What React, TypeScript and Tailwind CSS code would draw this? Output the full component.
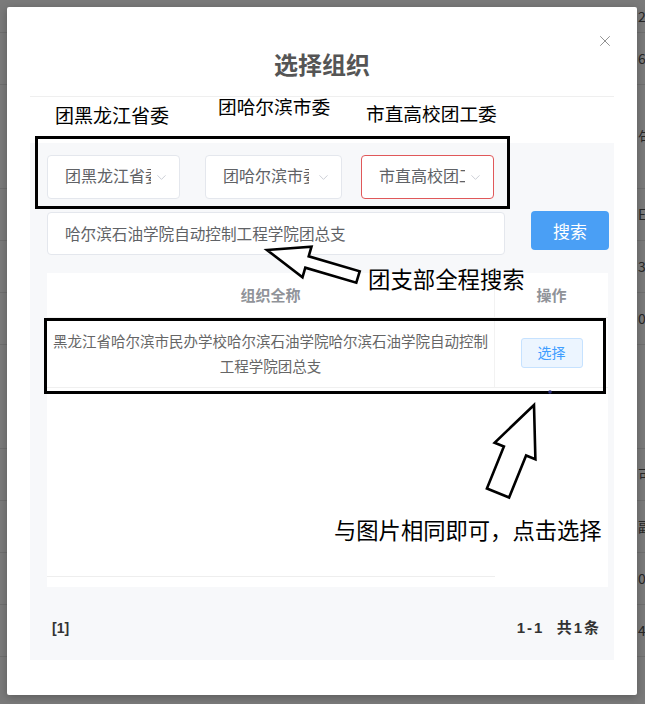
import { ChevronDown, X } from "lucide-react";

const bgRows = [
  { h: "h-[33px]", t: "2" },
  { h: "h-[52px]", t: "6" },
  { h: "h-[104px]", t: "句" },
  { h: "h-[52px]", t: "E" },
  { h: "h-[52px]", t: "3" },
  { h: "h-[52px]", t: "0" },
  { h: "h-[104px]", t: "" },
  { h: "h-[52px]", t: "可" },
  { h: "h-[52px]", t: "副" },
  { h: "h-[52px]", t: "0" },
  { h: "h-[52px]", t: "4" },
  { h: "h-[52px]", t: "" },
];

function Select({ label, width, danger }: { label: string; width: string; danger?: boolean }) {
  return (
    <div
      className={`${width} h-[44px] shrink-0 bg-white rounded-[4px] border flex items-center pl-[17px] pr-[10px] ${
        danger ? "border-[#e0585a]" : "border-[#e4e7ed]"
      }`}
    >
      <div className="flex-1 overflow-hidden whitespace-nowrap text-[16px] text-[#606266] leading-[22px]">
        <span className="inline-block w-[86px] overflow-hidden">{label}</span>
      </div>
      <ChevronDown size={15} strokeWidth={1.3} className="text-[#c0c4cc] shrink-0" />
    </div>
  );
}

export default function App() {
  return (
    <div className="relative w-[645px] h-[704px] overflow-hidden bg-[#7a7a7a] font-['Noto_Sans_CJK_SC',sans-serif]">
      {/* page behind the overlay */}
      <div className="flex flex-col">
        {bgRows.map((r, i) => (
          <div key={i} className={`${r.h} border-b border-[#6e6e6e] flex items-center pl-[638px] whitespace-nowrap text-[14px] text-[#262626]`}>
            {r.t}
          </div>
        ))}
      </div>

      {/* modal */}
      <div className="absolute left-[7px] top-[7px] w-[630px] h-[688px] bg-white rounded-[2px] shadow-[0_2px_8px_rgba(0,0,0,0.25)] flex flex-col">
        <X size={18} strokeWidth={1.3} className="absolute left-[589px] top-[25px] text-[#8f8f8f]" />
        <div className="h-[90px] mx-[23px] border-b border-[#efefef] flex justify-center">
          <h2 className="pt-[41px] text-[24px] leading-[32px] font-bold text-[#555]">选择组织</h2>
        </div>

        <div className="mt-[46px] mx-[23px] h-[517px] bg-[#f7f8fa] pl-[17px] pr-[13px] pt-[12px] flex flex-col">
          <div className="flex h-[44px]">
            <Select label="团黑龙江省委" width="w-[133px]" />
            <div className="ml-[25px]">
              <Select label="团哈尔滨市委" width="w-[137px]" />
            </div>
            <div className="ml-[19px]">
              <Select label="市直高校团工委" width="w-[133px]" danger />
            </div>
          </div>

          <div className="flex mt-[13px]">
            <div className="w-[458px] h-[43px] shrink-0 bg-white border border-[#e4e7ed] rounded-[4px] flex items-center pl-[17px] text-[15.6px] text-[#606266]">
              哈尔滨石油学院自动控制工程学院团总支
            </div>
            <button className="ml-[26px] -mt-[1px] w-[78px] h-[39px] shrink-0 rounded-[4px] bg-[#4a9ff5] text-white text-[17px]">
              搜索
            </button>
          </div>

          <div className="mt-[18px] w-[561px] h-[314px] bg-white flex flex-col">
            <div className="h-[45px] flex border-b border-[#f2f2f2] text-[15px] font-bold text-[#909399]">
              <div className="w-[448px] border-r border-[#f2f2f2] flex items-center justify-center">组织全称</div>
              <div className="flex-1 flex items-center justify-center">操作</div>
            </div>
            <div className="h-[70px] flex border-b border-[#f0f0f0]">
              <div className="w-[448px] border-r border-[#f2f2f2] flex items-center justify-center text-center text-[14.5px] leading-[25px] text-[#666] px-[4px]">
                黑龙江省哈尔滨市民办学校哈尔滨石油学院哈尔滨石油学院自动控制工程学院团总支
              </div>
              <div className="flex-1 flex items-center justify-center">
                <button className="w-[62px] h-[30px] rounded-[3px] bg-[#ecf5ff] border border-[#c6e2ff] text-[#409eff] text-[14px]">
                  选择
                </button>
              </div>
            </div>
            <div className="flex-1" />
            <div className="w-[448px] border-b border-[#eeeeee] mb-[10px]" />
          </div>

          <div className="flex-1 flex items-center justify-between pl-[5px] pt-[9px] font-['Liberation_Sans','Noto_Sans_CJK_SC',sans-serif] font-bold text-[#333]">
            <span className="text-[14px]">[1]</span>
            <span className="text-[15px] tracking-[2px]">1-1&nbsp;&nbsp;共1条</span>
          </div>
        </div>
      </div>

      {/* annotations */}
      <span className="absolute left-[55px] top-[102px] text-[19px] leading-[26px] text-black whitespace-nowrap">团黑龙江省委</span>
      <span className="absolute left-[218px] top-[93px] text-[18.7px] leading-[26px] text-black whitespace-nowrap">团哈尔滨市委</span>
      <span className="absolute left-[366px] top-[100px] text-[18.7px] leading-[26px] text-black whitespace-nowrap">市直高校团工委</span>
      <div className="absolute left-[35px] top-[136px] w-[475px] h-[73px] border-[3px] border-black" />
      <div className="absolute left-[44px] top-[318px] w-[562px] h-[76px] border-[3px] border-black" />
      <span className="absolute left-[368px] top-[264px] text-[22.4px] leading-[28px] text-black whitespace-nowrap">团支部全程搜索</span>
      <span className="absolute left-[334px] top-[515px] text-[22.3px] leading-[28px] text-black whitespace-nowrap">与图片相同即可，点击选择</span>
      <svg className="absolute left-0 top-0" width="645" height="704" viewBox="0 0 645 704">
        <polygon
          points="267,250 311.5,246.7 308.7,256.3 359.7,271.3 356.3,282.7 305.3,267.7 302.5,277.3"
          fill="white"
          stroke="black"
          strokeWidth="2.6"
          strokeLinejoin="miter"
        />
        <polygon
          points="534,405 535.4,459.3 526.1,455.5 509.1,497.5 486.9,488.5 503.9,446.5 494.6,442.7"
          fill="white"
          stroke="black"
          strokeWidth="2.6"
          strokeLinejoin="miter"
        />
        <circle cx="550" cy="392" r="1.8" fill="#2b2f7a" />
      </svg>
    </div>
  );
}
